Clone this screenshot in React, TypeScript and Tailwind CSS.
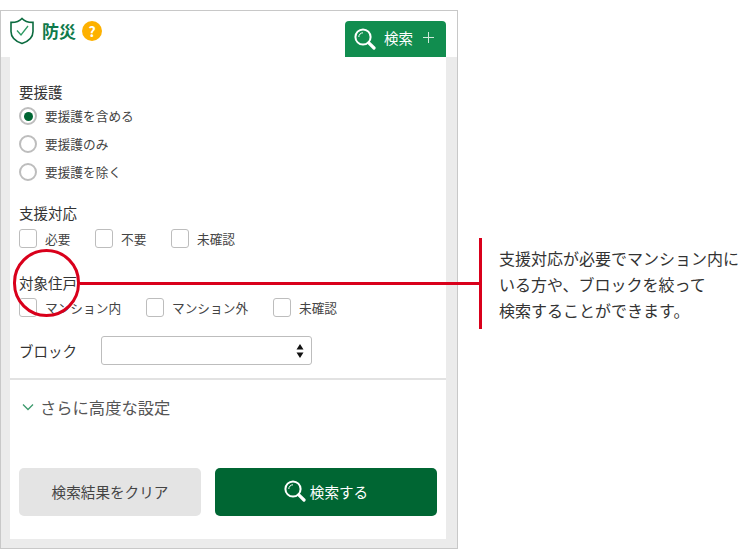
const font = '[font-family:"Noto_Sans_CJK_JP","Noto_Sans",sans-serif]';

function SearchIcon({ className }: { className?: string }) {
  return (
    <svg viewBox="0 0 22 22" fill="none" className={className}>
      <circle cx="9" cy="9" r="7.600" stroke="white" strokeWidth="2" />
      <path d="M4.800 9a4.200 4.200 0 0 1 4.200-4.200" stroke="white" strokeWidth="1" />
      <path d="M14.800 14.800l5.200 5.200" stroke="white" strokeWidth="3.200" strokeLinecap="round" />
    </svg>
  );
}

function Radio({ label, checked }: { label: string; checked?: boolean }) {
  return (
    <div className="flex h-7 items-center">
      <span className="flex h-[18px] w-[18px] items-center justify-center rounded-full border-2 border-[#bdbdbd] bg-white">
        {checked && <span className="h-[9px] w-[9px] rounded-full bg-[#006633]" />}
      </span>
      <span className="ml-2 text-[12.7px] text-[#444]">{label}</span>
    </div>
  );
}

function Check({ label, className }: { label: string; className?: string }) {
  return (
    <div className={`flex items-center ${className ?? ''}`}>
      <span className="h-[19px] w-[18px] rounded-[3px] border border-[#bdbdbd] bg-white" />
      <span className="ml-2 text-[12.7px] text-[#444]">{label}</span>
    </div>
  );
}

export default function App() {
  return (
    <div className={`relative flex h-[559px] w-[750px] overflow-hidden bg-white pt-[10px] ${font}`}>
      <div className="h-[539px] w-[458px] shrink-0 border border-b-2 border-[#c8c8c8]">
        <div className="flex h-[46px] justify-between bg-white pr-[11px]">
          <div className="flex items-start pl-2 pt-[6px]">
            <svg viewBox="0 0 26 28" fill="none" className="h-[28px] w-[26px]">
              <path d="M13 1.500c2.500 2.800 6 4 11 3.900v9c0 6-4.500 9.800-11 12.100-6.500-2.300-11-6.100-11-12.100v-9c5 .1 8.500-1.100 11-3.900z" stroke="#0b6b3f" strokeWidth="1.600" />
              <path d="M8 13.500l4 4.500 7-9" stroke="#2e9a63" strokeWidth="1.300" />
            </svg>
            <span className="ml-[7px] mt-[1px] text-[17px] leading-[26px] font-bold text-[#0f7a4b]">防災</span>
            <span className="ml-[6px] mt-[4px] flex h-5 w-5 items-center justify-center rounded-full bg-[#fdb100] text-[14px] font-bold leading-none text-white">?</span>
          </div>
          <div className="mt-[10px] flex h-9 w-[101px] items-center rounded-t-[4px] bg-[#118d4f] pl-[9px] text-[14.5px] text-white">
            <SearchIcon className="h-[22px] w-[22px]" />
            <span className="ml-2 -mt-[3px]">検索</span>
            <svg viewBox="0 0 11 11" className="-mt-[3px] ml-[10px] h-[11px] w-[11px]">
              <path d="M5.500 0v11M0 5.500h11" stroke="#cfe8da" strokeWidth="1" />
            </svg>
          </div>
        </div>

        <div className="h-[491px] bg-[#ebebeb] pb-[9px] pl-[9px] pr-[11px]">
          <div className="h-[482px] bg-white">
            <div className="px-[9px] pt-[23px]">
              <p className="h-[22px] text-[14.5px] leading-6 text-[#333]">要援護</p>
              <Radio label="要援護を含める" checked />
              <Radio label="要援護のみ" />
              <Radio label="要援護を除く" />

              <p className="mt-[15px] h-[25px] text-[14.5px] leading-6 text-[#333]">支援対応</p>
              <div className="flex h-[26px] items-center">
                <Check label="必要" className="w-[76px]" />
                <Check label="不要" className="w-[76px]" />
                <Check label="未確認" />
              </div>

              <p className="mt-[19px] h-6 text-[14.5px] leading-6 text-[#333]">対象住戸</p>
              <div className="flex h-[26px] items-center">
                <Check label="マンション内" className="w-[127px]" />
                <Check label="マンション外" className="w-[127px]" />
                <Check label="未確認" />
              </div>

              <div className="mt-[15px] flex h-[29px] items-center">
                <span className="w-[82px] text-[14.5px] text-[#333]">ブロック</span>
                <div className="flex h-[29px] w-[211px] items-center justify-end rounded-[3px] border border-[#bdbdbd] bg-white pr-[7px]">
                  <svg viewBox="0 0 8 14" className="h-[14px] w-2">
                    <path d="M4 0l3.500 5.500h-7zM4 14L.5 8.500h7z" fill="#111" />
                  </svg>
                </div>
              </div>
            </div>

            <div className="mt-[13px] h-[2px] bg-[#e2e2e2]" />

            <div className="flex h-[54px] items-center pl-[12px]">
              <svg viewBox="0 0 12 8" fill="none" className="h-2 w-3">
                <path d="M1 1.500l5 5 5-5" stroke="#3d9a6d" strokeWidth="1.300" />
              </svg>
              <span className="ml-[6px] text-[16.3px] text-[#555]">さらに高度な設定</span>
            </div>

            <div className="mt-[34px] flex gap-[14px] px-[9px]">
              <div className="flex h-12 w-[182px] items-center justify-center rounded-[5px] bg-[#e4e4e4] text-[14.6px] text-[#444]">
                検索結果をクリア
              </div>
              <div className="flex h-12 w-[222px] items-center justify-center rounded-[5px] bg-[#006633] text-[14.6px] text-white">
                <SearchIcon className="-mt-[3px] h-[22px] w-[22px]" />
                <span className="ml-[4px]">検索する</span>
              </div>
            </div>
          </div>
        </div>
      </div>

      <div className="ml-[21px] mt-[228px] flex h-[91px] w-[271px] shrink-0 items-center border-l-[3px] border-[#d9001b] pl-[17px]">
        <p className="text-[16px] leading-[26px] whitespace-nowrap text-[#333]">
          支援対応が必要でマンション内に
          <br />
          いる方や、ブロックを絞って
          <br />
          検索することができます。
        </p>
      </div>

      {/* annotation over the panel */}
      <div className="absolute left-[13px] top-[249px] h-[68px] w-[67px] rounded-full border-[3px] border-[#d9001b]" />
      <div className="absolute left-[80px] top-[282px] h-[3px] w-[400px] bg-[#d9001b]" />
    </div>
  );
}
